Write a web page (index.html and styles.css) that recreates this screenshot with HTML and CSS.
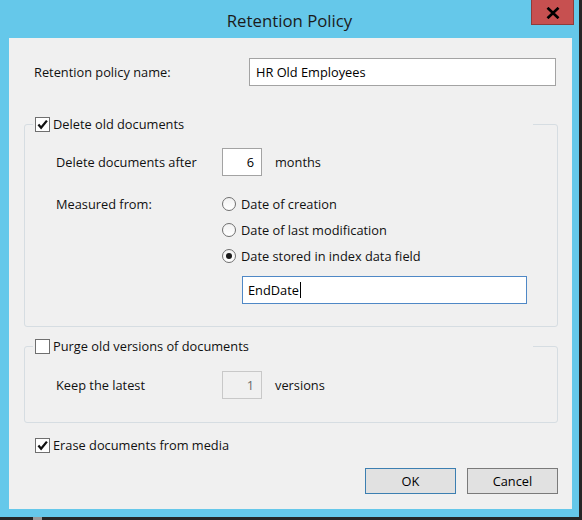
FILE: index.html
```html
<!DOCTYPE html>
<html>
<head>
<meta charset="utf-8">
<title>Retention Policy</title>
<link rel="stylesheet" href="styles.css">
</head>
<body>
<div class="frame">
  <div class="titlebar">
    <div class="title">Retention Policy</div>
    <div class="close">
      <svg width="14" height="12" viewBox="0 0 14 12"><path d="M1.5 0.8 L12.5 11.2 M12.5 0.8 L1.5 11.2" stroke="#000" stroke-width="2.7" fill="none"/></svg>
    </div>
  </div>
  <div class="client">
    <div class="name-row">
      <span class="name-label">Retention policy name:</span>
      <div class="textbox name-box">HR Old Employees</div>
    </div>

    <fieldset class="group group-delete">
      <legend class="group-legend">
        <span class="check"><svg width="13" height="13" viewBox="0 0 13 13"><path d="M2.4 6.6 L5.1 9.8 L10.9 2.6" stroke="#111" stroke-width="2.3" fill="none"/></svg></span>
        <span>Delete old documents</span>
      </legend>
      <div class="form-grid">
        <div class="field-label">Delete documents after</div>
        <div class="inline">
          <div class="textbox num">6</div>
          <span class="unit">months</span>
        </div>
        <div class="field-label measured">Measured from:</div>
        <div class="radios">
          <div class="radio-row"><span class="radio"></span><span>Date of creation</span></div>
          <div class="radio-row"><span class="radio"></span><span>Date of last modification</span></div>
          <div class="radio-row"><span class="radio selected"></span><span>Date stored in index data field</span></div>
          <div class="textbox field-box">EndDate<span class="caret"></span></div>
        </div>
      </div>
    </fieldset>

    <fieldset class="group group-purge">
      <legend class="group-legend">
        <span class="check unchecked"></span>
        <span>Purge old versions of documents</span>
      </legend>
      <div class="form-grid">
        <div class="field-label">Keep the latest</div>
        <div class="inline">
          <div class="textbox num disabled">1</div>
          <span class="unit">versions</span>
        </div>
      </div>
    </fieldset>

    <div class="erase-row">
      <span class="check"><svg width="13" height="13" viewBox="0 0 13 13"><path d="M2.4 6.6 L5.1 9.8 L10.9 2.6" stroke="#111" stroke-width="2.3" fill="none"/></svg></span>
      <span>Erase documents from media</span>
    </div>

    <div class="buttons">
      <div class="button default">OK</div>
      <div class="button">Cancel</div>
    </div>
  </div>
</div>
<div class="shadow-mark"></div>
</body>
</html>
```
FILE: styles.css
```css
* { box-sizing: border-box; }

html, body {
  margin: 0;
  padding: 0;
}

body {
  width: 582px;
  height: 520px;
  background: #262626;
  overflow: hidden;
  font-family: "Segoe UI", "Open Sans", sans-serif;
  font-size: 12.8px;
  line-height: 16px;
  color: #111;
}

.frame {
  width: 579px;
  height: 517px;
  background: #65c8ea;
  display: flex;
  flex-direction: column;
}

.titlebar {
  height: 38px;
  display: grid;
  grid-template-columns: 1fr auto 1fr;
}

.title {
  grid-column: 2;
  font-size: 16.8px;
  line-height: 35px;
  padding-top: 3px;
  color: #1b1b1b;
}

.close {
  grid-column: 3;
  justify-self: end;
  align-self: start;
  width: 43px;
  height: 25px;
  margin-right: 5px;
  background: #c75050;
  border: 1px solid #8e3c3c;
  border-top: none;
  display: flex;
  align-items: center;
  justify-content: center;
  padding-top: 1px;
}

.close svg { display: block; }

.client {
  margin-left: 9px;
  width: 563px;
  height: 471px;
  background: #f0f0f0;
  padding: 20px 14px 0 15px;
}

.name-row {
  display: flex;
  align-items: center;
  height: 28px;
  padding-left: 10px;
}

.name-label {
  width: 215px;
}

.textbox {
  height: 28px;
  background: #fff;
  border: 1px solid #a3a3a3;
  display: flex;
  align-items: center;
  color: #000;
}

.name-box {
  width: 307px;
  padding-left: 6px;
}

.group {
  width: 534px;
  min-width: 0;
  margin: 30px 0 0 0;
  padding: 16px 8px 22px 8px;
  border: 1px solid #d6dde2;
  border-radius: 3px;
}

.group-purge {
  margin-top: 11px;
  padding-top: 17px;
  padding-bottom: 23px;
}

.group-legend {
  width: 500px;
  height: 16px;
  padding: 0 0 0 2px;
  display: flex;
  align-items: center;
  gap: 3px;
  background: #f0f0f0;
}

.check {
  width: 15px;
  height: 15px;
  flex: none;
  border: 1px solid #6f6f6f;
  background: #fff;
  display: flex;
  align-items: center;
  justify-content: center;
}

.check svg { display: block; }

.form-grid {
  margin-left: 23px;
  display: grid;
  grid-template-columns: 166px 1fr;
  row-gap: 15px;
  align-items: center;
}

.field-label.measured {
  align-self: start;
  line-height: 26px;
}

.inline {
  display: flex;
  align-items: center;
}

.num {
  width: 40px;
  justify-content: flex-end;
  padding-right: 7px;
}

.num.disabled {
  background: #f0f0f0;
  border-color: #c8c8c8;
  color: #6d6d6d;
}

.unit {
  margin-left: 13px;
}

.radios {
  display: flex;
  flex-direction: column;
}

.radio-row {
  height: 26px;
  display: flex;
  align-items: center;
  gap: 5px;
}

.radio {
  width: 14px;
  height: 14px;
  flex: none;
  border: 1px solid #6f6f6f;
  border-radius: 50%;
  background: linear-gradient(#f2f2f2, #ffffff);
  display: flex;
  align-items: center;
  justify-content: center;
}

.radio.selected::after {
  content: "";
  width: 6px;
  height: 6px;
  border-radius: 50%;
  background: #1a1a1a;
}

.field-box {
  width: 285px;
  margin: 7px 0 0 20px;
  padding-left: 5px;
  border-color: #4f88c6;
}

.caret {
  display: inline-block;
  width: 1px;
  height: 16px;
  background: #000;
  margin-left: 1px;
}

.erase-row {
  margin-top: 14px;
  height: 16px;
  padding-left: 11px;
  display: flex;
  align-items: center;
  gap: 3px;
}

.buttons {
  margin-top: 15px;
  display: flex;
  justify-content: flex-end;
  gap: 11px;
}

.button {
  width: 91px;
  height: 26px;
  background: #e1e1e1;
  border: 1px solid #7a7a7a;
  display: flex;
  align-items: center;
  justify-content: center;
  color: #000;
}

.button.default {
  border-color: #3c7fb1;
}

.shadow-mark {
  margin-left: 33px;
  width: 9px;
  height: 3px;
  background: #9a9a9a;
}
```
